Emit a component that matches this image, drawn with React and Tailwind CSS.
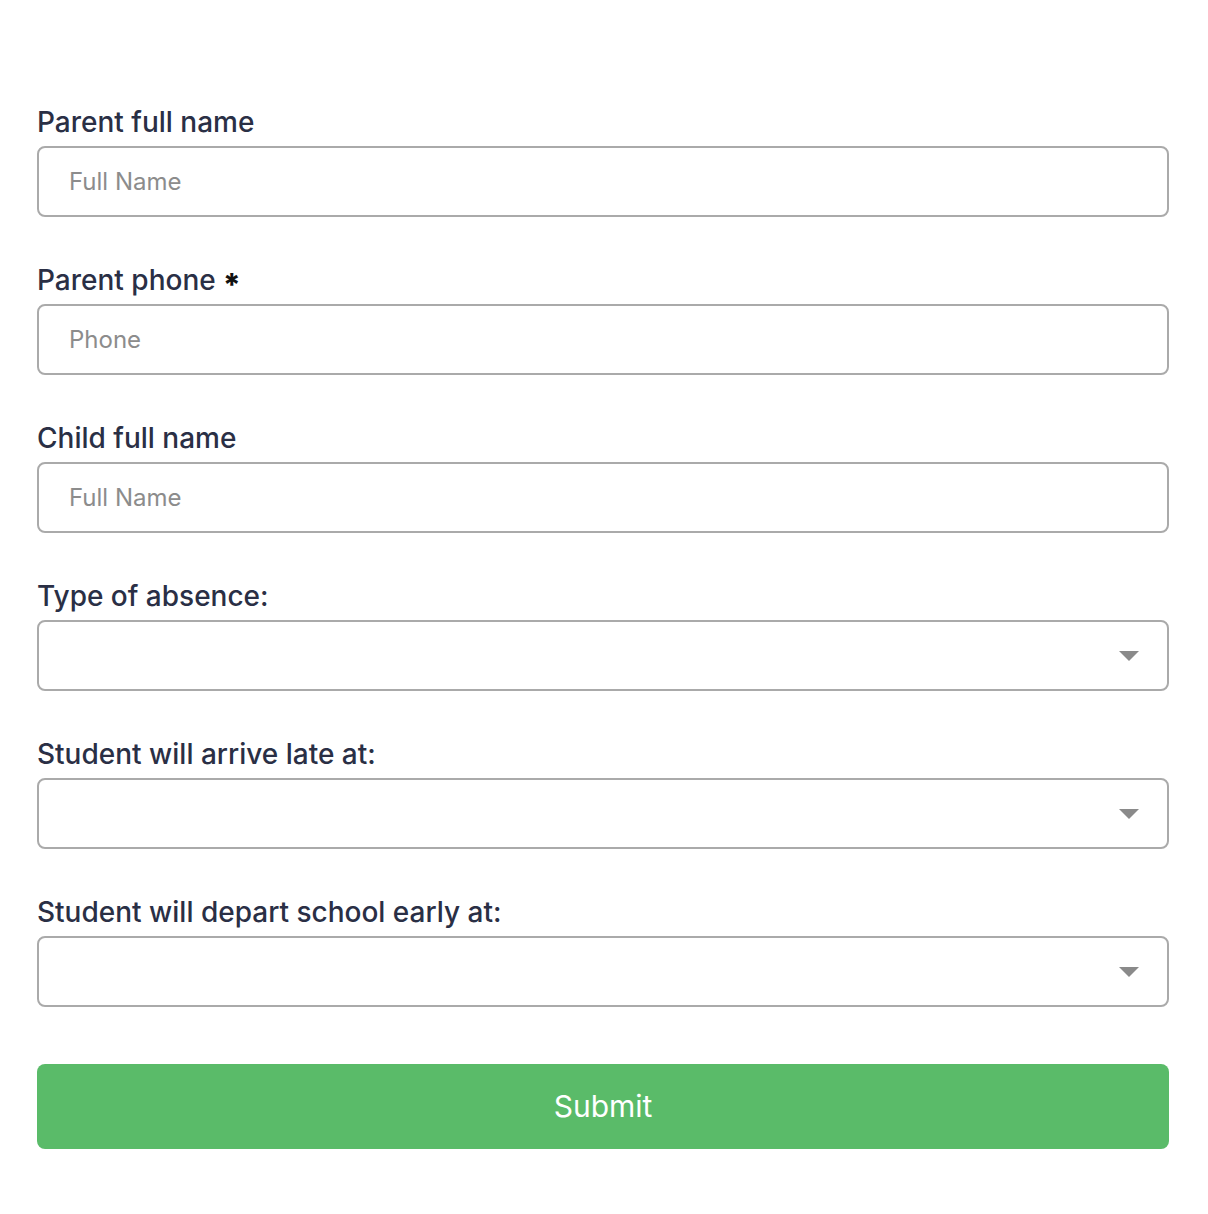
import React from 'react';

// Campo de texto con etiqueta
function TextField({ label, placeholder, required = false }) {
  return (
    <div className="mb-[45px]">
      <label className="block text-[28px] leading-[36px] font-medium text-[#2a2f45] mb-[6px]">
        {label}
        {required && (
          <span className="ml-[7px] align-[-6px] text-[31px] leading-[0] font-extrabold text-[#111]">*</span>
        )}
      </label>
      <input
        type="text"
        placeholder={placeholder}
        className="block w-full h-[71px] rounded-[8px] border-2 border-[#aaaaaa] bg-white px-[30px] text-[24px] text-[#333] placeholder:text-[#8c8c8c] outline-none"
      />
    </div>
  );
}

// Select vacío con flecha
function SelectField({ label, last = false }) {
  return (
    <div className={last ? 'mb-[57px]' : 'mb-[45px]'}>
      <label className="block text-[28px] leading-[36px] font-medium text-[#2a2f45] mb-[6px]">
        {label}
      </label>
      <div className="relative">
        <select className="block w-full h-[71px] appearance-none rounded-[8px] border-2 border-[#aaaaaa] bg-white px-[30px] text-[24px] text-[#333] outline-none">
          <option value=""></option>
        </select>
        <svg
          className="pointer-events-none absolute right-[30px] top-[31px]"
          width="20"
          height="11"
          viewBox="0 0 20 11"
        >
          <path d="M0 0 L20 0 L10 10 Z" fill="#8a8a8a" />
        </svg>
      </div>
    </div>
  );
}

export default function App() {
  return (
    <div className="min-h-[1214px] bg-white font-['Inter',sans-serif]">
      <form className="ml-[37px] w-[1132px] pt-[104px]">
        <TextField label="Parent full name" placeholder="Full Name" />
        <TextField label="Parent phone" placeholder="Phone" required />
        <TextField label="Child full name" placeholder="Full Name" />
        <SelectField label="Type of absence:" />
        <SelectField label="Student will arrive late at:" />
        <SelectField label="Student will depart school early at:" last />
        <button
          type="button"
          className="block w-full h-[85px] rounded-[8px] bg-[#5abb69] text-white text-[30px] font-normal"
        >
          Submit
        </button>
      </form>
    </div>
  );
}
